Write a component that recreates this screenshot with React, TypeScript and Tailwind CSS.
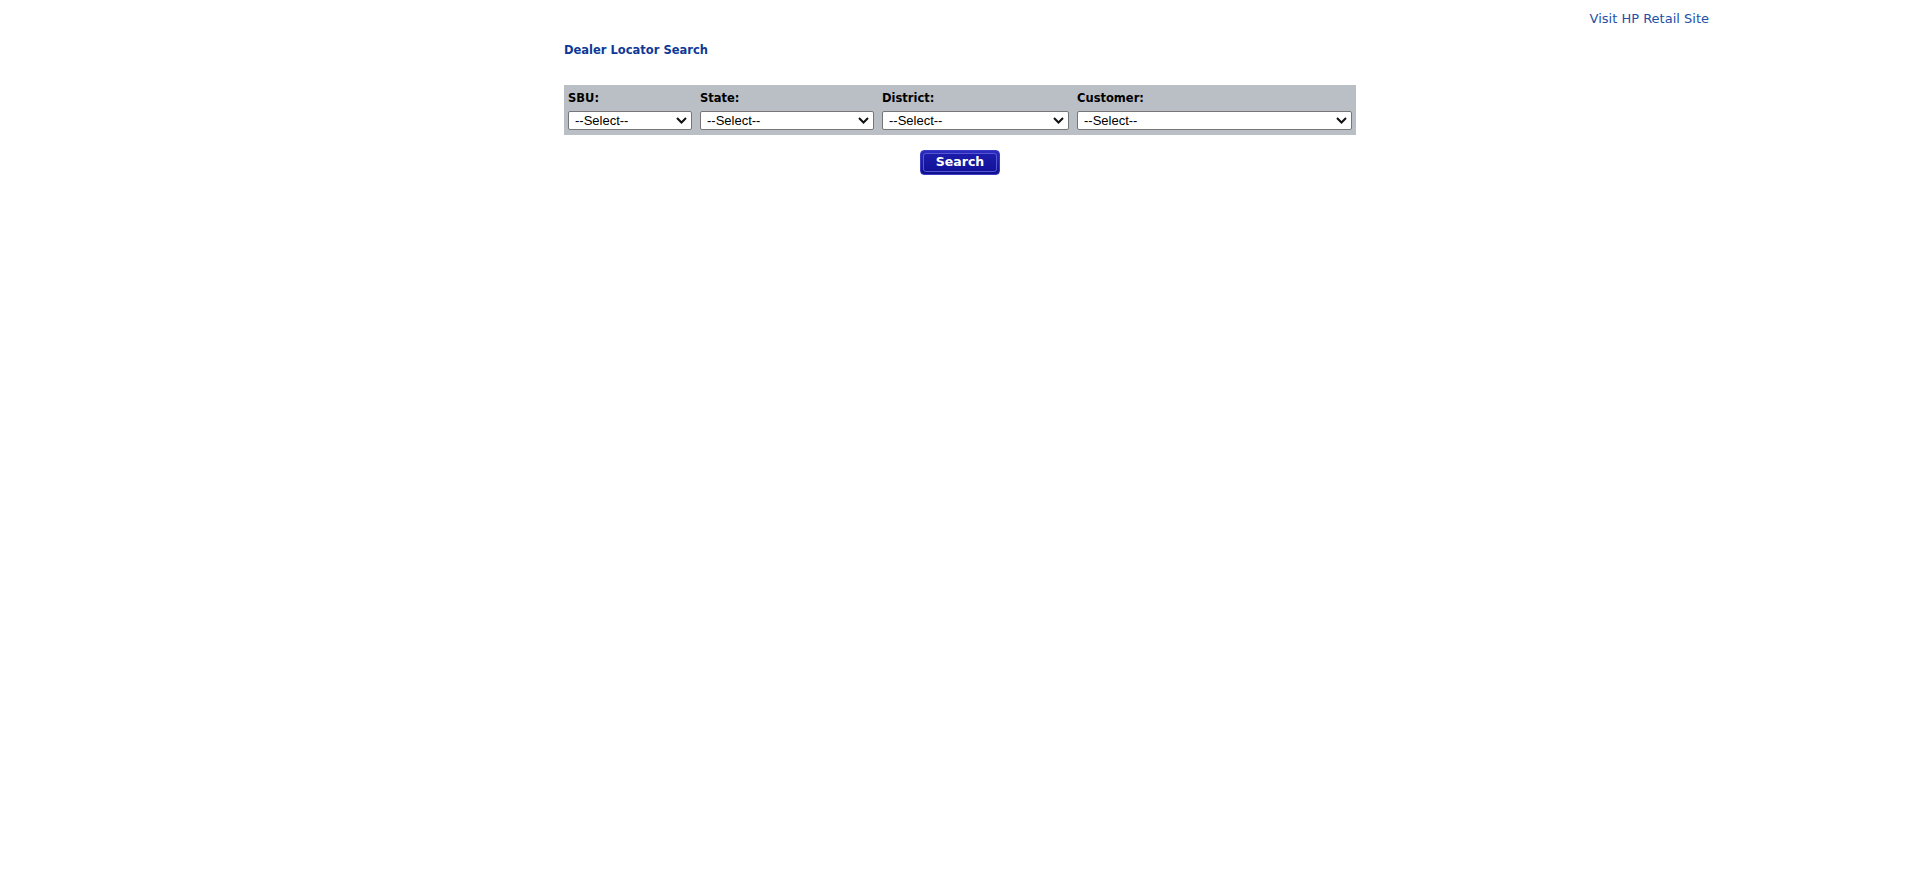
import React from "react";

const fields = [
    { label: "SBU:", width: "w-[124px]" },
    { label: "State:", width: "w-[174px]" },
    { label: "District:", width: "w-[187px]" },
    { label: "Customer:", width: "w-[275px]" },
];

const Chevron = () => (
    <svg
        className="absolute right-[5px] top-[6px] pointer-events-none"
        width="11"
        height="7"
        viewBox="0 0 11 7"
        fill="none"
    >
        <path d="M1 1l4.5 4.5L10 1" stroke="#111" strokeWidth="2" />
    </svg>
);

const App = () => {
    return (
        <div className="min-h-screen bg-white font-['DejaVu_Sans',Verdana,sans-serif]">
            <div className="flex justify-end pr-[211px] pt-[11px]">
                <a href="#" className="text-[13px] leading-[16px] text-[#2450a6]">
                    Visit HP Retail Site
                </a>
            </div>
            <div className="w-[792px] mx-auto">
                <h1 className="mt-[16px] text-[11.5px] leading-[15px] font-bold text-[#0e3996]">
                    Dealer Locator Search
                </h1>
                <div className="mt-[27px] bg-[#babfc6] flex gap-2 px-1 pt-[6px] pb-[5px]">
                    {fields.map((f) => (
                        <div key={f.label} className="flex flex-col">
                            <label className="block text-[11.5px] leading-[15px] font-bold text-black">
                                {f.label}
                            </label>
                            <div className={`${f.width} relative mt-[5px]`}>
                                <select className="block appearance-none w-full h-[19px] bg-white border border-[#767676] rounded-[2px] pl-[6px] text-[13px] leading-[17px] font-['Liberation_Sans',Arial,sans-serif] text-black">
                                    <option>--Select--</option>
                                </select>
                                <Chevron />
                            </div>
                        </div>
                    ))}
                </div>
                <div className="flex justify-center mt-[15px]">
                    <button className="w-[80px] h-[25px] rounded-[4px] border border-[#3a3ac4] bg-gradient-to-b from-[#2c2cc0] to-[#0e0e8c] p-[2px]">
                        <span className="flex h-full items-center justify-center rounded-[3px] border border-[#5656d4] bg-gradient-to-b from-[#1c1caa] to-[#12129a] text-[12.5px] font-bold text-white font-['DejaVu_Sans',Verdana,sans-serif]">
                            Search
                        </span>
                    </button>
                </div>
            </div>
        </div>
    );
};

export default App;
